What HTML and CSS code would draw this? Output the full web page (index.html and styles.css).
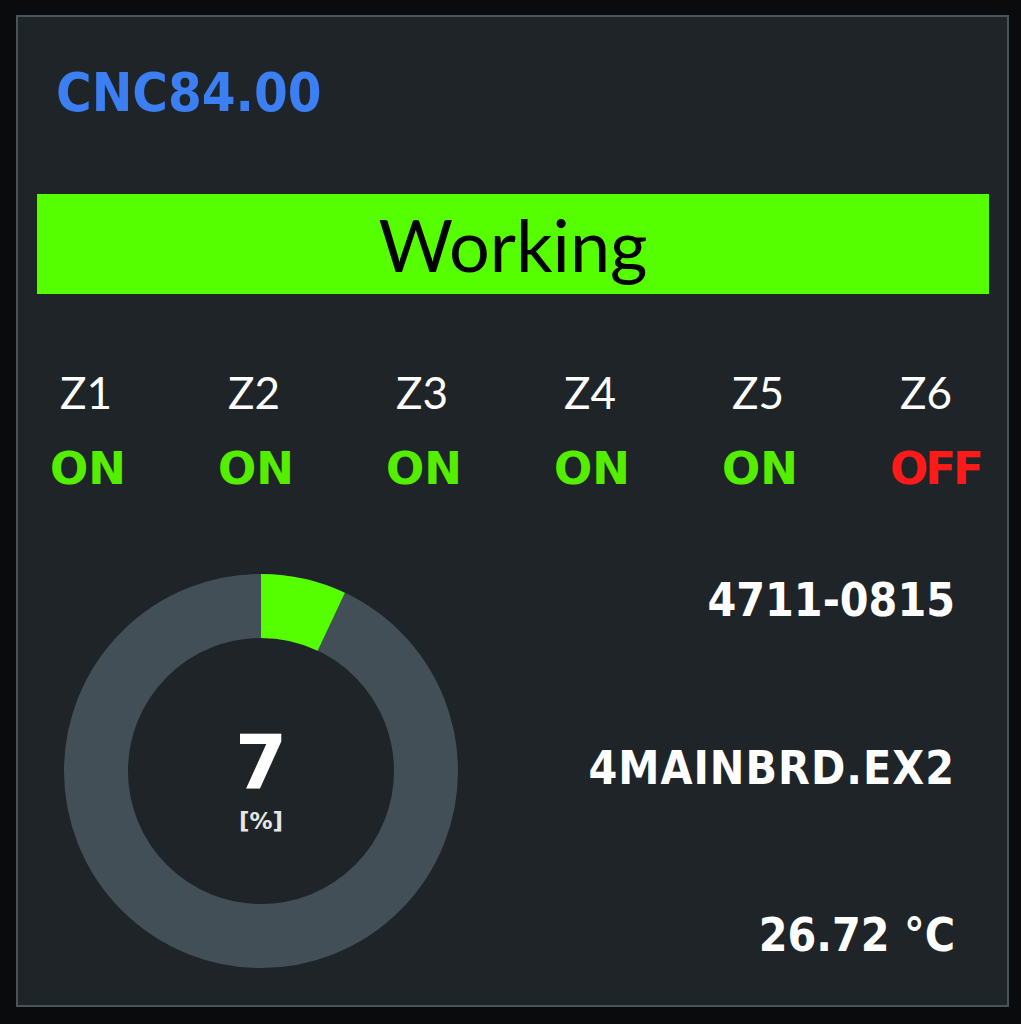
FILE: index.html
```html
<!DOCTYPE html>
<html lang="en">
<head>
    <meta charset="UTF-8">
    <title>CNC84.00</title>
    <link rel="stylesheet" href="styles.css">
</head>
<body>

<div class="panel">
    <h1 class="title">CNC84.00</h1>

    <div class="state">Working</div>

    <ul class="zones">
        <li><span class="zone_name">Z1</span><span class="on">ON</span></li>
        <li><span class="zone_name">Z2</span><span class="on">ON</span></li>
        <li><span class="zone_name">Z3</span><span class="on">ON</span></li>
        <li><span class="zone_name">Z4</span><span class="on">ON</span></li>
        <li><span class="zone_name">Z5</span><span class="on">ON</span></li>
        <li><span class="zone_name">Z6</span><span class="off">OFF</span></li>
    </ul>

    <div class="bottom">
        <div class="gauge">
            <svg class="ring" width="394" height="394" viewBox="0 0 394 394">
                <circle cx="197" cy="197" r="165" fill="none" stroke="#424f57" stroke-width="64"/>
                <!-- 7% of 1036.7 -->
                <circle cx="197" cy="197" r="165" fill="none" stroke="#55ff00" stroke-width="64"
                        stroke-dasharray="72.6 1036.7" transform="rotate(-90 197 197)"/>
            </svg>
            <div class="gauge_text">
                <div class="gauge_value">7</div>
                <div class="gauge_unit">[%]</div>
            </div>
        </div>
        <div class="info">
            <div>4711-0815</div>
            <div class="program">4MAINBRD.EX2</div>
            <div>26.72 °C</div>
        </div>
    </div>
</div>

</body>
</html>
```

FILE: styles.css
```css
body{
    margin:0;
    background:#090b0d;
}
.panel{
    box-sizing:border-box;
    width:993px;
    height:992px;
    margin:15px 0 0 16px;
    border:2px solid #48535a;
    background:#1f2428;
}
.title{
    margin:0;
    padding:49px 0 0 38px;
    height:54px;
    line-height:54px;
    font-family:"DejaVu Sans Condensed","DejaVu Sans",sans-serif;
    font-weight:bold;
    font-size:54px;
    color:#3b7ff2;
}
.state{
    margin:74px 18px 0 19px;
    height:100px;
    background:#55ff00;
    box-shadow:0 0 0 1px #1a2a10;
    display:flex;
    align-items:center;
    justify-content:center;
    font-family:Lato,"Noto Sans",sans-serif;
    font-size:72px;
    color:#000;
}
.zones{
    list-style:none;
    margin:76px 0 0 32px;
    padding:0;
    display:grid;
    grid-template-columns:repeat(6,168px);
}
.zones li{
    display:flex;
    flex-direction:column;
    align-items:flex-start;
}
.zone_name{
    padding-left:10px;
    height:44px;
    line-height:44px;
    font-family:Lato,"Noto Sans",sans-serif;
    font-size:44px;
    color:#fff;
}
.on,.off{
    margin-top:32px;
    height:46px;
    line-height:46px;
    font-family:"DejaVu Sans",sans-serif;
    font-weight:bold;
    font-size:45px;
}
.on{
    color:#55ee00;
}
.off{
    letter-spacing:-3px;
    color:#ff1a1a;
}
.bottom{
    margin-top:82px;
    padding:0 52px 0 46px;
    display:flex;
    justify-content:space-between;
}
.gauge{
    display:grid;
    width:394px;
    height:394px;
}
.ring,.gauge_text{
    grid-area:1/1;
}
.gauge_text{
    padding-top:151px;
    display:flex;
    flex-direction:column;
    align-items:center;
    font-family:"DejaVu Sans",sans-serif;
    font-weight:bold;
    color:#fff;
}
.gauge_value{
    height:75px;
    line-height:75px;
    font-size:75px;
}
.gauge_unit{
    margin-top:9px;
    height:24px;
    line-height:24px;
    font-size:23px;
    color:#e6e6e6;
}
.info{
    padding:3px 0 10px;
    display:flex;
    flex-direction:column;
    justify-content:space-between;
    align-items:flex-end;
    font-family:"DejaVu Sans Condensed","DejaVu Sans",sans-serif;
    font-weight:bold;
    font-size:46px;
    line-height:46px;
    color:#fff;
}
.program{
    letter-spacing:1px;
}
```
